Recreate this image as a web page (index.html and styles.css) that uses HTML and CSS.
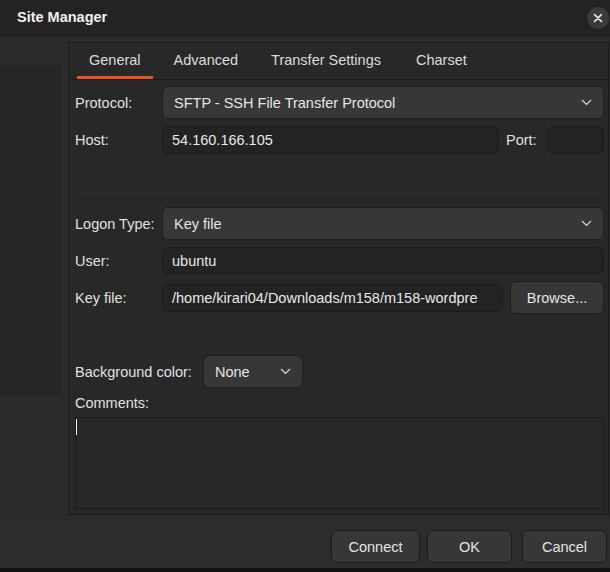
FILE: index.html
```html
<!DOCTYPE html>
<html>
<head>
<meta charset="utf-8">
<link rel="stylesheet" href="styles.css">
</head>
<body>
<div class="window">
  <header class="titlebar">
    <span class="title">Site Manager</span>
    <span class="close">
      <svg width="10" height="10" viewBox="0 0 10 10"><path d="M1.5 1.5 L8.5 8.5 M8.5 1.5 L1.5 8.5" stroke="#f2f2f2" stroke-width="1.6" stroke-linecap="round"/></svg>
    </span>
  </header>
  <div class="main">
    <div class="tree"></div>
    <div class="notebook">
      <div class="tabs">
        <span class="tab active">General</span>
        <span class="tab">Advanced</span>
        <span class="tab">Transfer Settings</span>
        <span class="tab">Charset</span>
      </div>
      <div class="page">
        <div class="row r-protocol">
          <span class="label">Protocol:</span>
          <div class="combo grow"><span>SFTP - SSH File Transfer Protocol</span><svg class="chev" width="11" height="7" viewBox="0 0 11 7"><path d="M1 1 L5.5 5.5 L10 1" fill="none" stroke="#d8d8d8" stroke-width="1.2"/></svg></div>
        </div>
        <div class="row r-host">
          <span class="label">Host:</span>
          <div class="entry grow">54.160.166.105</div>
          <span class="label port-label">Port:</span>
          <div class="entry port"></div>
        </div>
        <div class="sep sep1"></div>
        <div class="row r-logon">
          <span class="label">Logon Type:</span>
          <div class="combo grow"><span>Key file</span><svg class="chev" width="11" height="7" viewBox="0 0 11 7"><path d="M1 1 L5.5 5.5 L10 1" fill="none" stroke="#d8d8d8" stroke-width="1.2"/></svg></div>
        </div>
        <div class="row r-user">
          <span class="label">User:</span>
          <div class="entry grow">ubuntu</div>
        </div>
        <div class="row r-key">
          <span class="label">Key file:</span>
          <div class="entry grow clip">/home/kirari04/Downloads/m158/m158-wordpre</div>
          <div class="button browse">Browse...</div>
        </div>
        <div class="sep sep2"></div>
        <div class="row r-bg">
          <span class="label bg-label">Background color:</span>
          <div class="combo small"><span>None</span><svg class="chev" width="11" height="7" viewBox="0 0 11 7"><path d="M1 1 L5.5 5.5 L10 1" fill="none" stroke="#d8d8d8" stroke-width="1.2"/></svg></div>
        </div>
        <div class="comments-label">Comments:</div>
        <div class="textarea"><span class="caret"></span></div>
      </div>
    </div>
  </div>
  <footer class="footer">
    <div class="button fbtn connect">Connect</div>
    <div class="button fbtn ok">OK</div>
    <div class="button fbtn cancel">Cancel</div>
  </footer>
  <div class="edge"></div>
</div>
</body>
</html>
```

FILE: styles.css
```css
* { box-sizing: border-box; }
html, body { margin: 0; padding: 0; }
body {
  width: 610px;
  height: 572px;
  overflow: hidden;
  background: #2c2c2c;
  font-family: "Liberation Sans", Arial, sans-serif;
  font-size: 14.5px;
  color: #e2e2e2;
}
.window {
  display: flex;
  flex-direction: column;
  height: 572px;
}
.titlebar {
  height: 36px;
  flex: none;
  background: #232323;
  border-bottom: 1px solid #1b1b1b;
  display: flex;
  align-items: center;
  justify-content: space-between;
  padding: 0 0 1px 17px;
}
.title {
  font-weight: bold;
  font-size: 14.5px;
  color: #f0f0f0;
}
.close {
  width: 22px;
  height: 22px;
  border-radius: 50%;
  background: #3a3a3a;
  display: flex;
  align-items: center;
  justify-content: center;
  margin-right: 1px;
  margin-top: 1px;
}
.main {
  flex: none;
  height: 479px;
  display: flex;
  align-items: flex-start;
  background: #2b2b2b;
}
.tree {
  width: 62px;
  height: 330px;
  margin-top: 29px;
  background: #262626;
  flex: none;
}
.notebook {
  margin-top: 6px;
  margin-left: 6px;
  width: 541px;
  height: 473px;
  border: 1px solid #1c1c1c;
  background: #282828;
  display: flex;
  flex-direction: column;
}
.tabs {
  height: 37px;
  flex: none;
  display: flex;
  align-items: stretch;
  padding-left: 4px;
  border-bottom: 1px solid #1c1c1c;
  background: #282828;
}
.tab {
  margin: 0 4px;
  padding: 1px 12px 0;
  display: flex;
  align-items: center;
  color: #dcdcdc;
  border-bottom: 3px solid transparent;
}
.tab:nth-child(2) { margin-left: 5px; }
.tab:nth-child(3) { margin-left: 5px; }
.tab:nth-child(4) { margin-left: 7px; }
.tab.active {
  border-bottom-color: #e95420;
}
.page {
  flex: 1;
  padding: 6px 4px 5px 6px;
  display: flex;
  flex-direction: column;
}
.row {
  display: flex;
  align-items: center;
}
.label {
  width: 87px;
  flex: none;
  color: #e0e0e0;
}
.grow { flex: 1; }
.combo {
  height: 33px;
  background: #373737;
  border: 1px solid #1f1f1f;
  border-radius: 6px;
  display: flex;
  align-items: center;
  justify-content: space-between;
  padding: 0 11px 0 11px;
  color: #e6e6e6;
}
.entry {
  height: 28px;
  background: #232323;
  border: 1px solid #1c1c1c;
  border-radius: 6px;
  display: flex;
  align-items: center;
  padding: 0 9px;
  color: #e8e8e8;
  white-space: nowrap;
  overflow: hidden;
}
.r-host { margin-top: 7px; }
.port-label { width: 33px; margin: 0 8px 0 7px; }
.entry.port { width: 57px; flex: none; }
.sep {
  height: 1px;
  background: #222222;
  margin-left: 0;
}
.sep1 { margin-top: 45px; }
.r-logon { margin-top: 7px; }
.r-user { margin-top: 7px; }
.r-user .entry { height: 27px; }
.r-key { margin-top: 7px; }
.r-key .entry { height: 28px; }
.clip { padding-left: 9px; }
.button {
  background: #373737;
  border: 1px solid #1c1c1c;
  border-radius: 6px;
  display: flex;
  align-items: center;
  justify-content: center;
  color: #e4e4e4;
}
.browse {
  width: 94px;
  height: 33px;
  flex: none;
  margin-left: 7px;
}
.sep2 { margin-top: 33px; }
.r-bg { margin-top: 7px; }
.bg-label { width: 128px; }
.combo.small {
  width: 100px;
  padding-left: 11px;
  padding-right: 11px;
}
.comments-label {
  margin-top: 7px;
  height: 17px;
  line-height: 17px;
  color: #e0e0e0;
}
.textarea {
  margin-top: 5px;
  flex: 1;
  border: 1px solid #1c1c1c;
  background: #282828;
  position: relative;
}
.caret {
  position: absolute;
  left: 0;
  top: 1px;
  width: 1px;
  height: 16px;
  background: #eeeeee;
}
.footer {
  flex: 1;
  display: flex;
  justify-content: flex-end;
  align-items: flex-start;
  padding: 14px 3px 0 0;
  background: #2c2c2c;
  border-top: 1px solid #2a2a2a;
}
.fbtn {
  height: 33px;
  margin-left: 7px;
}
.connect { width: 89px; }
.ok { width: 85px; }
.cancel { width: 85px; margin-left: 10px; }
.edge {
  height: 4px;
  flex: none;
  background: #111111;
}
```
